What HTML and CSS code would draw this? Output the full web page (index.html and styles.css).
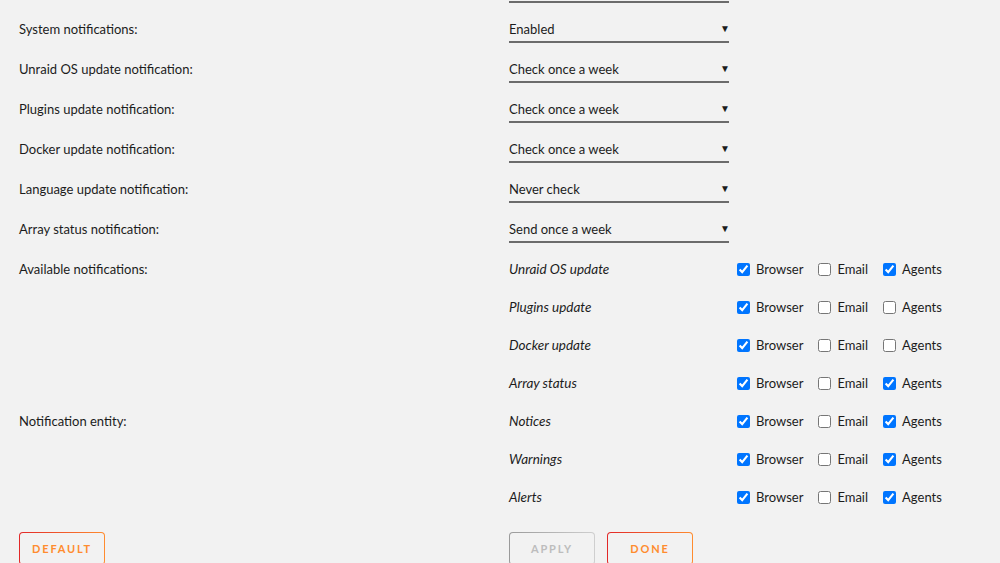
FILE: index.html
```html
<!DOCTYPE html>
<html lang="en">

<head>
    <meta charset="UTF-8">
    <title>Notification Settings</title>
    <link rel="stylesheet" href="styles.css">
</head>

<body>

    <form class="settings">

        <div class="row row-stub">
            <span class="label"></span>
            <div class="select-stub"></div>
        </div>

        <div class="row">
            <span class="label">System notifications:</span>
            <div class="select"><select><option>Enabled</option><option>Disabled</option></select></div>
        </div>

        <div class="row">
            <span class="label">Unraid OS update notification:</span>
            <div class="select"><select><option>Check once a week</option></select></div>
        </div>

        <div class="row">
            <span class="label">Plugins update notification:</span>
            <div class="select"><select><option>Check once a week</option></select></div>
        </div>

        <div class="row">
            <span class="label">Docker update notification:</span>
            <div class="select"><select><option>Check once a week</option></select></div>
        </div>

        <div class="row">
            <span class="label">Language update notification:</span>
            <div class="select"><select><option>Never check</option></select></div>
        </div>

        <div class="row">
            <span class="label">Array status notification:</span>
            <div class="select"><select><option>Send once a week</option></select></div>
        </div>

        <div class="checks">
            <div class="row-check">
                <span class="label">Available notifications:</span>
                <em class="item">Unraid OS update</em>
                <label class="box"><input type="checkbox" checked>Browser</label>
                <label class="box"><input type="checkbox">Email</label>
                <label class="box"><input type="checkbox" checked>Agents</label>
            </div>

            <div class="row-check">
                <span class="label"></span>
                <em class="item">Plugins update</em>
                <label class="box"><input type="checkbox" checked>Browser</label>
                <label class="box"><input type="checkbox">Email</label>
                <label class="box"><input type="checkbox">Agents</label>
            </div>

            <div class="row-check">
                <span class="label"></span>
                <em class="item">Docker update</em>
                <label class="box"><input type="checkbox" checked>Browser</label>
                <label class="box"><input type="checkbox">Email</label>
                <label class="box"><input type="checkbox">Agents</label>
            </div>

            <div class="row-check">
                <span class="label"></span>
                <em class="item">Array status</em>
                <label class="box"><input type="checkbox" checked>Browser</label>
                <label class="box"><input type="checkbox">Email</label>
                <label class="box"><input type="checkbox" checked>Agents</label>
            </div>

            <div class="row-check">
                <span class="label">Notification entity:</span>
                <em class="item">Notices</em>
                <label class="box"><input type="checkbox" checked>Browser</label>
                <label class="box"><input type="checkbox">Email</label>
                <label class="box"><input type="checkbox" checked>Agents</label>
            </div>

            <div class="row-check">
                <span class="label"></span>
                <em class="item">Warnings</em>
                <label class="box"><input type="checkbox" checked>Browser</label>
                <label class="box"><input type="checkbox">Email</label>
                <label class="box"><input type="checkbox" checked>Agents</label>
            </div>

            <div class="row-check">
                <span class="label"></span>
                <em class="item">Alerts</em>
                <label class="box"><input type="checkbox" checked>Browser</label>
                <label class="box"><input type="checkbox">Email</label>
                <label class="box"><input type="checkbox" checked>Agents</label>
            </div>
        </div>

        <div class="buttons">
            <span class="label"><button type="button" class="btn">Default</button></span>
            <button type="button" class="btn" disabled>Apply</button>
            <button type="button" class="btn">Done</button>
        </div>

    </form>

</body>

</html>
```

FILE: styles.css
```css
body {
    margin: 0;
    background-color: #f2f2f2;
    color: #1c1c1c;
    font-family: Lato, "Open Sans", sans-serif;
    font-size: 13px;
    line-height: 16px;
    overflow: hidden;
}

.settings {
    padding-left: 19px;
}

.row {
    display: flex;
    align-items: flex-end;
    height: 40px;
}

.row-stub {
    height: 3px;
}

.row .label {
    padding-bottom: 6px;
}

.label {
    width: 490px;
    flex-shrink: 0;
}

.select {
    position: relative;
    width: 220px;
    border-bottom: 2px solid #6c6c6c;
}

.select-stub {
    width: 220px;
    height: 1px;
    border-bottom: 2px solid #6c6c6c;
}

.select select {
    appearance: none;
    display: block;
    width: 100%;
    border: 0;
    background: transparent;
    font: inherit;
    line-height: 16px;
    color: inherit;
    padding: 0 0 4px 0;
    outline: none;
}

.select::after {
    content: "\25BC";
    position: absolute;
    right: -1px;
    top: -1px;
    font-size: 10px;
    pointer-events: none;
}

.checks {
    padding-top: 7px;
}

.row-check {
    display: flex;
    align-items: center;
    height: 38px;
}

.item {
    width: 228px;
    flex-shrink: 0;
    font-size: 13.5px;
}

.box {
    display: flex;
    align-items: center;
    margin-right: 15px;
}

.box input {
    width: 13px;
    height: 13px;
    margin: 0 6px 0 0;
}

.buttons {
    display: flex;
    padding-top: 16px;
}

.btn {
    width: 86px;
    height: 33px;
    margin-right: 12px;
    border: 1px solid transparent;
    border-radius: 4px;
    background: linear-gradient(#f2f2f2, #f2f2f2) padding-box,
        linear-gradient(90deg, #e22828, #ff8c2f) border-box;
    color: #ff8c2f;
    font-family: inherit;
    font-size: 11px;
    font-weight: bold;
    letter-spacing: 1.8px;
    text-transform: uppercase;
}

.btn:disabled {
    background: linear-gradient(#f2f2f2, #f2f2f2) padding-box,
        linear-gradient(90deg, #9a9a9a, #cfcfcf) border-box;
    color: #bdbdbd;
}
```
